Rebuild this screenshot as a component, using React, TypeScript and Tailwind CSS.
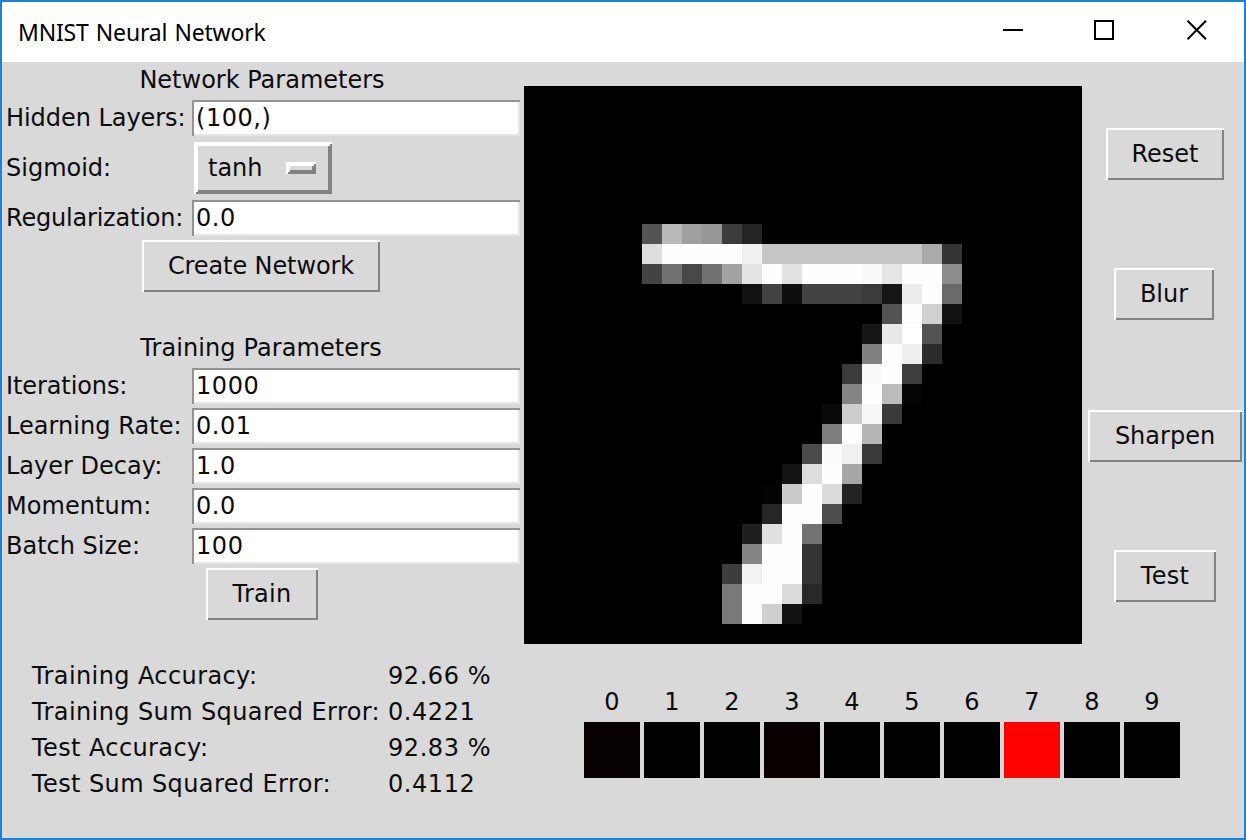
import type { ReactNode } from "react";

const digit: [number, number, number[]][] = [
  [7, 6, [84, 185, 159, 151, 60, 36]],
  [8, 6, [222, 254, 254, 254, 254, 241, 198, 198, 198, 198, 198, 198, 198, 198, 170, 52]],
  [9, 6, [67, 114, 72, 114, 163, 227, 254, 225, 254, 254, 254, 250, 229, 254, 254, 140]],
  [10, 11, [17, 66, 14, 67, 67, 67, 59, 21, 236, 254, 106]],
  [11, 18, [83, 253, 209, 18]],
  [12, 17, [22, 233, 255, 83]],
  [13, 17, [129, 254, 238, 44]],
  [14, 16, [59, 249, 254, 62]],
  [15, 16, [133, 254, 187, 5]],
  [16, 15, [9, 205, 248, 58]],
  [17, 15, [126, 254, 182]],
  [18, 14, [75, 251, 240, 57]],
  [19, 13, [19, 221, 254, 166]],
  [20, 12, [3, 203, 254, 219, 35]],
  [21, 12, [38, 254, 254, 77]],
  [22, 11, [31, 224, 254, 115, 1]],
  [23, 11, [133, 254, 254, 52]],
  [24, 10, [61, 242, 254, 254, 52]],
  [25, 10, [121, 254, 254, 219, 40]],
  [26, 10, [121, 254, 207, 18]],
];

const outputs = ["#070000", "#000", "#000", "#090000", "#000", "#000", "#000", "#ff0000", "#000", "#000"];

const stats = [
  ["Training Accuracy:", "92.66 %"],
  ["Training Sum Squared Error:", "0.4221"],
  ["Test Accuracy:", "92.83 %"],
  ["Test Sum Squared Error:", "0.4112"],
];

function Button({ className, children }: { className: string; children: ReactNode }) {
  return (
    <button
      className={`flex h-[52px] shrink-0 items-center justify-center whitespace-nowrap shadow-[inset_2px_2px_0_#fff,inset_-2px_-2px_0_#828282] ${className}`}
    >
      {children}
    </button>
  );
}

function Field({ label, value, tracking = "" }: { label: string; value: string; tracking?: string }) {
  return (
    <label className="flex h-10 items-center">
      <span className={`w-[186px] shrink-0 pl-1 whitespace-nowrap ${tracking}`}>{label}</span>
      <input
        defaultValue={value}
        className="mr-0.5 ml-1 h-9 w-[328px] bg-white px-1 tracking-[0.55px] shadow-[inset_2px_2px_0_#949494,inset_-2px_-2px_0_#e6e6e6] outline-none"
      />
    </label>
  );
}

function Heading({ children }: { children: ReactNode }) {
  return <h2 className="flex h-9 items-center justify-center">{children}</h2>;
}

export default function App() {
  return (
    <div className="flex h-[840px] w-[1246px] flex-col overflow-hidden border-2 border-[#1883d7] bg-[#d9d9d9] font-['DejaVu_Sans',sans-serif] text-[24px] leading-8 text-[#0c0c0c]">
      <header className="flex h-[60px] shrink-0 items-center justify-between bg-white pl-4 font-['Noto_Sans',sans-serif] text-black">
        <h1 className="text-[23px] tracking-[-0.2px] [word-spacing:1.5px]">MNIST Neural Network</h1>
        <svg className="mr-9 mb-1 h-5 w-[206px]" viewBox="0 0 206 20" fill="none" stroke="#000" strokeWidth="2">
          <path d="M1 10H21" />
          <path d="M93 1H111V19H93Z" />
          <path d="M185.5 .7L204 19.2M204 .7L185.5 19.2" />
        </svg>
      </header>
      <main className="flex min-h-0 flex-1">
        <section className="flex w-[520px] shrink-0 flex-col">
          <Heading>Network Parameters</Heading>
          <Field label="Hidden Layers:" value="(100,)" tracking="tracking-[-0.05px]" />
          <div className="flex h-[60px] items-center">
            <span className="w-[192px] shrink-0 pl-1">Sigmoid:</span>
            <button className="flex h-[52px] w-[138px] items-center justify-between pr-4 pl-3.5 shadow-[inset_2px_2px_0_#fff,inset_-2px_-2px_0_#828282,inset_4px_4px_0_#fff,inset_-4px_-4px_0_#828282]">
              tanh
              <span className="h-3 w-[30px] shadow-[inset_2px_2px_0_#fff,inset_-2px_-2px_0_#828282,inset_4px_4px_0_#fff,inset_-4px_-4px_0_#828282]" />
            </button>
          </div>
          <Field label="Regularization:" value="0.0" tracking="tracking-[-0.2px]" />
          <div className="flex h-[92px] justify-center pt-0.5 pr-0.5">
            <Button className="w-[238px] tracking-[-0.1px]">Create Network</Button>
          </div>
          <Heading><span className="mr-0.5 tracking-[0.1px]">Training Parameters</span></Heading>
          <Field label="Iterations:" value="1000" tracking="tracking-[-0.1px]" />
          <Field label="Learning Rate:" value="0.01" tracking="tracking-[0.05px]" />
          <Field label="Layer Decay:" value="1.0" />
          <Field label="Momentum:" value="0.0" tracking="tracking-[0.05px]" />
          <Field label="Batch Size:" value="100" />
          <div className="flex h-[92px] justify-center pt-0.5">
            <Button className="w-[112px] tracking-[0.3px]">Train</Button>
          </div>
          <dl className="pl-[30px]">
            {stats.map(([name, value]) => (
              <div key={name} className="flex h-9 items-center whitespace-nowrap">
                <dt className="w-[356px] shrink-0 tracking-[0.4px]">{name}</dt>
                <dd className="tracking-[0.55px]">{value}</dd>
              </div>
            ))}
          </dl>
        </section>
        <section className="ml-0.5 flex w-[558px] shrink-0 flex-col pt-6">
          <svg className="h-[558px] w-[558px] shrink-0 bg-black" viewBox="2 2 558 558" shapeRendering="crispEdges">
            {digit.flatMap(([row, col, values]) =>
              values.map((v, i) => (
                <rect key={`${row}-${i}`} x={(col + i) * 20} y={row * 20} width="20" height="20" fill={`rgb(${v},${v},${v})`} />
              )),
            )}
          </svg>
          <div className="mt-10 ml-[60px] flex gap-1">
            {outputs.map((color, i) => (
              <div key={i} className="flex w-14 shrink-0 flex-col items-center">
                <span className="h-[38px] leading-9">{i}</span>
                <span className="h-14 w-14" style={{ backgroundColor: color }} />
              </div>
            ))}
          </div>
        </section>
        <aside className="flex w-[162px] shrink-0 flex-col items-center pt-[66px] pl-1">
          <Button className="mb-[88px] w-[118px]">Reset</Button>
          <Button className="mr-0.5 mb-[90px] w-[100px]">Blur</Button>
          <Button className="mb-[88px] w-[154px]">Sharpen</Button>
          <Button className="w-[102px] tracking-[0.3px]">Test</Button>
        </aside>
      </main>
    </div>
  );
}
